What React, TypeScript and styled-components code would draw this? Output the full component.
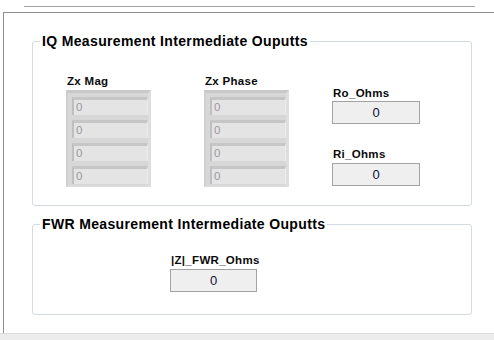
import React from 'react'
import styled, { createGlobalStyle } from 'styled-components'

const GlobalStyle = createGlobalStyle`
  html, body {
    margin: 0;
    padding: 0;
    background: #ffffff;
  }
  body {
    font-family: "Liberation Sans", Arial, sans-serif;
    width: 494px;
    height: 340px;
    overflow: hidden;
  }
`

const Page = styled.div`
  display: flex;
  flex-direction: column;
  height: 340px;
  padding-top: 6px;
  box-sizing: border-box;
`

const TopRule = styled.div`
  margin-left: 24px;
  width: 451px;
  height: 1px;
  background: #a3a3a3;
`

const Frame = styled.div`
  flex: 1;
  margin: 5px 0 0 3px;
  border-top: 1px solid #8e8e8e;
  border-left: 1px solid #8e8e8e;
  display: flex;
  flex-direction: column;
`

const BottomBar = styled.div`
  height: 6px;
  background: #ececec;
  border-top: 1px solid #dcdcdc;
`

const Group = styled.fieldset<{ $top: number; $padTop: number; $padBottom: number }>`
  margin: ${(p) => p.$top}px 0 0 28px;
  width: 440px;
  box-sizing: border-box;
  border: 1px solid #d3dae2;
  border-radius: 3px;
  padding: ${(p) => p.$padTop}px 0 ${(p) => p.$padBottom}px 7px;
`

const Legend = styled.legend`
  padding: 0 2px;
  font-size: 14px;
  line-height: 16px;
  letter-spacing: 0.35px;
  font-weight: bold;
  color: #000000;
`

const Row = styled.div`
  display: flex;
  align-items: flex-start;
  margin-left: 26px;
`

const Column = styled.div<{ $gap?: number; $top?: number }>`
  display: flex;
  flex-direction: column;
  margin-left: ${(p) => p.$gap ?? 0}px;
  padding-top: ${(p) => p.$top ?? 0}px;
`

const Label = styled.div<{ $below?: number }>`
  font-size: 11.5px;
  line-height: 14px;
  letter-spacing: 0.3px;
  font-weight: bold;
  color: #0a0a0a;
  padding-left: 1px;
  margin-bottom: ${(p) => p.$below ?? 2}px;
  white-space: nowrap;
`

const ArrayFrame = styled.div`
  width: 85px;
  box-sizing: border-box;
  background: #d7d7d7;
  border-top: 3px solid #c9c9c9;
  border-right: 3px solid #dedede;
  border-left: 2px solid #cfcfcf;
  border-bottom: 2px solid #dcdcdc;
  padding: 4px 0 1px 4px;
  display: flex;
  flex-direction: column;
  gap: 5px;
`

const Cell = styled.div`
  width: 76px;
  height: 18px;
  box-sizing: border-box;
  background: #e4e4e4;
  border-top: 3px solid #c6c6c6;
  border-left: 2px solid #bfbfbf;
  border-right: 1px solid #ececec;
  padding-left: 2px;
  font-size: 11.5px;
  line-height: 15px;
  color: #a096a4;
`

const ValueBox = styled.div<{ $width: number; $height: number }>`
  width: ${(p) => p.$width}px;
  height: ${(p) => p.$height}px;
  box-sizing: border-box;
  border: 1px solid #a2a2a2;
  background: #efefef;
  display: flex;
  align-items: center;
  justify-content: center;
  font-size: 13px;
  color: #10103a;
`

const Spacer = styled.div<{ $h: number }>`
  height: ${(p) => p.$h}px;
`

const IndicatorArray: React.FC<{ label: string; values: number[]; gap?: number }> = ({
  label,
  values,
  gap,
}) => (
  <Column $gap={gap}>
    <Label>{label}</Label>
    <ArrayFrame>
      {values.map((v, i) => (
        <Cell key={i}>{v}</Cell>
      ))}
    </ArrayFrame>
  </Column>
)

const App: React.FC = () => {
  const zeros = [0, 0, 0, 0]
  return (
    <>
      <GlobalStyle />
      <Page>
        <TopRule />
        <Frame>
          <Group $top={20} $padTop={25} $padBottom={18}>
            <Legend>IQ Measurement Intermediate Ouputts</Legend>
            <Row>
              <IndicatorArray label="Zx Mag" values={zeros} />
              <IndicatorArray label="Zx Phase" values={zeros} gap={53} />
              <Column $gap={43} $top={12}>
                <Label $below={1}>Ro_Ohms</Label>
                <ValueBox $width={88} $height={23}>0</ValueBox>
                <Spacer $h={23} />
                <Label $below={2}>Ri_Ohms</Label>
                <ValueBox $width={88} $height={23}>0</ValueBox>
              </Column>
            </Row>
          </Group>
          <Group $top={10} $padTop={21} $padBottom={22}>
            <Legend>FWR Measurement Intermediate Ouputts</Legend>
            <Column $gap={130}>
              <Label>|Z|_FWR_Ohms</Label>
              <ValueBox $width={87} $height={23}>0</ValueBox>
            </Column>
          </Group>
        </Frame>
        <BottomBar />
      </Page>
    </>
  )
}

export default App
